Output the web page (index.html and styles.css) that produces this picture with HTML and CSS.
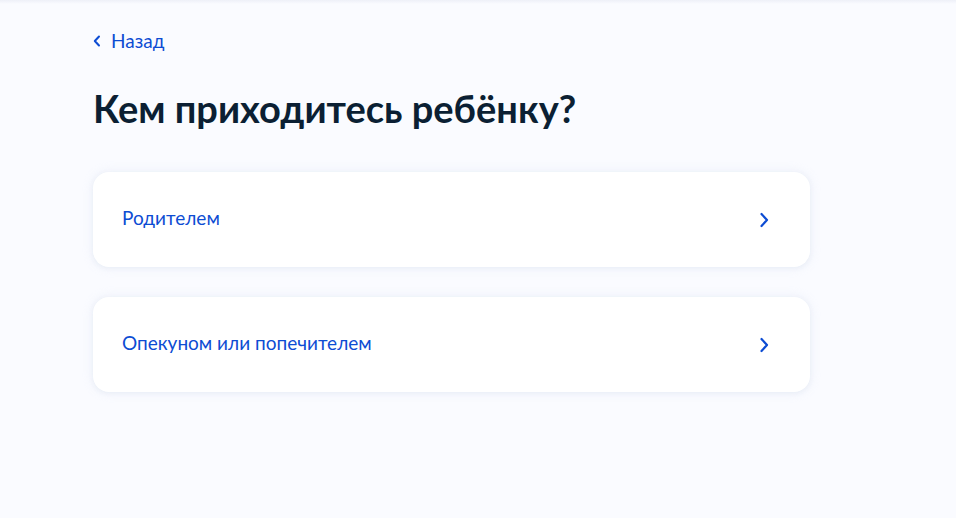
FILE: index.html
```html
<!DOCTYPE html>
<html lang="ru">
<head>
<meta charset="utf-8">
<link rel="stylesheet" href="styles.css">
</head>
<body>
<div class="topline"></div>
<main class="page">
  <a class="back" href="#">
    <svg class="back-icon" width="8" height="12" viewBox="0 0 8 12"><path d="M6 1.5 L1.8 6 L6 10.5" fill="none" stroke="#0d4cd3" stroke-width="2" stroke-linecap="round" stroke-linejoin="round"/></svg>
    <span>Назад</span>
  </a>
  <h1 class="title">Кем приходитесь ребёнку?</h1>
  <div class="list">
    <a class="card" href="#">
      <span class="card-text">Родителем</span>
      <svg class="chev" width="10" height="16" viewBox="0 0 10 16"><path d="M2.5 2 L8 8 L2.5 14" fill="none" stroke="#0d4cd3" stroke-width="2.2" stroke-linecap="round" stroke-linejoin="round"/></svg>
    </a>
    <a class="card" href="#">
      <span class="card-text">Опекуном или попечителем</span>
      <svg class="chev" width="10" height="16" viewBox="0 0 10 16"><path d="M2.5 2 L8 8 L2.5 14" fill="none" stroke="#0d4cd3" stroke-width="2.2" stroke-linecap="round" stroke-linejoin="round"/></svg>
    </a>
  </div>
</main>
</body>
</html>
```
FILE: styles.css
```css
html, body {
  margin: 0;
  padding: 0;
  background: #fafbff;
  height: 100%;
}
body {
  font-family: Lato, "Noto Sans", sans-serif;
  overflow: hidden;
}
.topline {
  height: 4px;
  background: linear-gradient(#eef0f8, #fafbff);
}
.page {
  padding: 26px 0 0 93px;
  width: 717px;
}
.back {
  display: inline-flex;
  align-items: center;
  gap: 10px;
  color: #0d4cd3;
  text-decoration: none;
  font-size: 19px;
  line-height: 22px;
}
.back-icon {
  display: block;
}
.title {
  margin: 33px 0 0 0;
  font-size: 38px;
  line-height: 46px;
  font-weight: 700;
  color: #0b1f33;
}
.list {
  margin-top: 41px;
  display: flex;
  flex-direction: column;
  gap: 30px;
}
.card {
  display: flex;
  align-items: center;
  justify-content: space-between;
  height: 95px;
  box-sizing: border-box;
  padding: 0 41px 0 29px;
  background: #fff;
  border-radius: 16px;
  box-shadow: 0 1px 4px rgba(231, 236, 245, 0.9), 0 0 12px rgba(230, 235, 245, 0.6);
  text-decoration: none;
}
.card-text {
  color: #0d4cd3;
  font-size: 19px;
  line-height: 24px;
  margin-bottom: 3px;
}
.chev {
  display: block;
}
```
